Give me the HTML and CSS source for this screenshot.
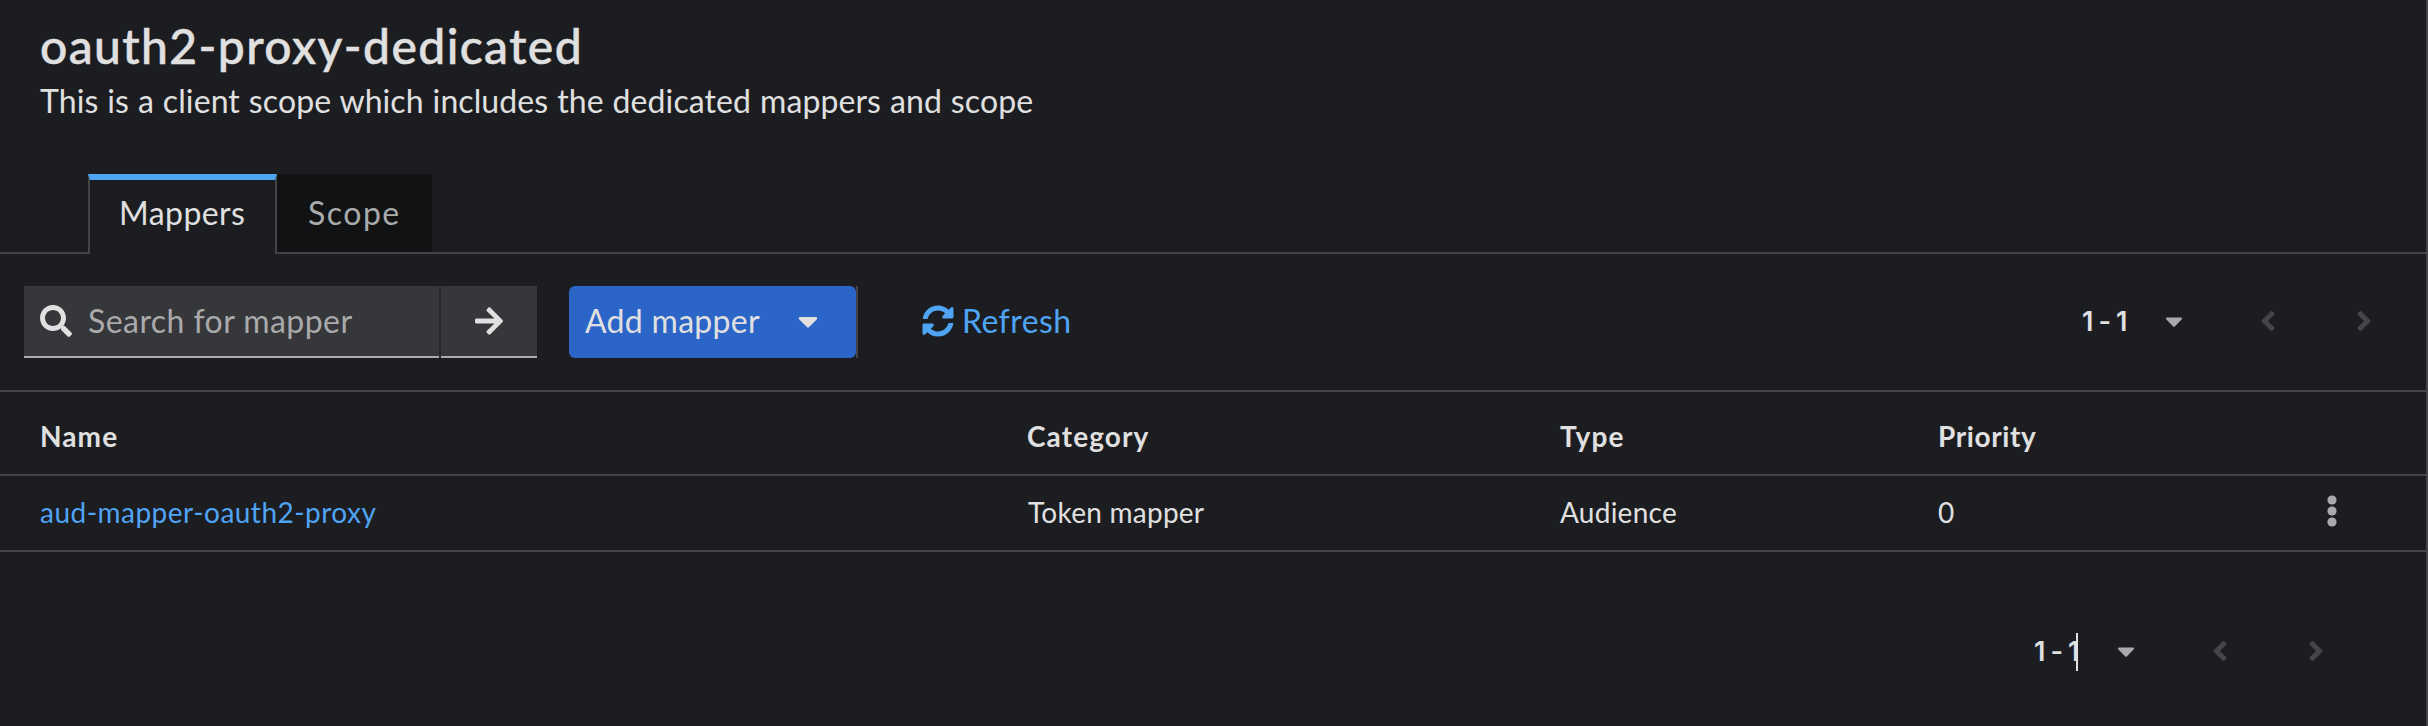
FILE: index.html
```
<!DOCTYPE html>
<html lang="en">
<head>
<meta charset="utf-8">
<title>oauth2-proxy-dedicated</title>
<link rel="stylesheet" href="styles.css">
</head>
<body>
<svg class="sprite" aria-hidden="true">
  <symbol id="search" viewBox="0 0 512 512"><path d="M505 442.7L405.3 343c-4.5-4.5-10.6-7-17-7H372c27.6-35.3 44-79.7 44-128C416 93.1 322.9 0 208 0S0 93.1 0 208s93.1 208 208 208c48.3 0 92.7-16.4 128-44v16.3c0 6.4 2.5 12.5 7 17l99.7 99.7c9.4 9.4 24.6 9.4 33.9 0l28.3-28.3c9.4-9.4 9.4-24.6.1-34zM208 336c-70.7 0-128-57.2-128-128 0-70.7 57.2-128 128-128 70.7 0 128 57.2 128 128 0 70.7-57.2 128-128 128z"/></symbol>
  <symbol id="arrow" viewBox="0 0 448 512"><path d="M190.5 66.9l22.2-22.2c9.4-9.4 24.6-9.4 33.9 0L441 239c9.4 9.4 9.4 24.6 0 33.9L246.6 467.3c-9.4 9.4-24.6 9.4-33.9 0l-22.2-22.2c-9.5-9.5-9.3-25 .4-34.3L311.4 296H24c-13.3 0-24-10.7-24-24v-32c0-13.3 10.7-24 24-24h287.4L190.9 101.2c-9.8-9.3-10-24.8-.4-34.3z"/></symbol>
  <symbol id="caret" viewBox="0 0 320 512"><path d="M31.3 192h257.3c17.8 0 26.7 21.5 14.1 34.1L174.1 354.7c-7.8 7.8-20.5 7.8-28.3 0L17.2 226.1C4.6 213.5 13.5 192 31.3 192z"/></symbol>
  <symbol id="angle" viewBox="0 0 256 512"><path d="M31.7 239l136-136c9.4-9.4 24.6-9.4 33.9 0l22.6 22.6c9.4 9.4 9.4 24.6 0 33.9L127.9 256l96.4 96.4c9.4 9.4 9.4 24.6 0 33.9L201.7 409c-9.4 9.4-24.6 9.4-33.9 0l-136-136c-9.5-9.4-9.5-24.6-.1-34z"/></symbol>
  <symbol id="sync" viewBox="0 0 512 512"><path d="M370.72 133.28C339.458 104.008 298.888 87.962 255.848 88c-77.458.068-144.328 53.178-162.791 126.85-1.344 5.363-6.122 9.15-11.651 9.15H24.103c-7.498 0-13.194-6.807-11.807-14.176C33.933 94.924 134.813 8 256 8c66.448 0 126.791 26.136 171.315 68.685L463.03 40.97C478.149 25.851 504 36.559 504 57.941V192c0 13.255-10.745 24-24 24H345.941c-21.382 0-32.09-25.851-16.971-40.971l41.75-41.749zM32 296h134.059c21.382 0 32.09 25.851 16.971 40.971l-41.75 41.75c31.262 29.273 71.835 45.319 114.876 45.28 77.418-.07 144.315-53.144 162.787-126.849 1.344-5.363 6.122-9.15 11.651-9.15h57.304c7.498 0 13.194 6.807 11.807 14.176C478.067 417.076 377.187 504 256 504c-66.448 0-126.791-26.136-171.315-68.685L48.97 471.03C33.851 486.149 8 475.441 8 454.059V320c0-13.255 10.745-24 24-24z"/></symbol>
  <symbol id="kebab" viewBox="0 0 12 32"><circle cx="6" cy="5" r="4.6"/><circle cx="6" cy="16" r="4.6"/><circle cx="6" cy="27" r="4.6"/></symbol>
</svg>
<main class="page">
  <header class="heading">
    <h1 class="title">oauth2-proxy-dedicated</h1>
    <p class="subtitle">This is a client scope which includes the dedicated mappers and scope</p>
  </header>
  <nav class="tabs">
    <a class="tab tab-current">Mappers</a>
    <a class="tab tab-scope">Scope</a>
    <span class="tabs-rest"></span>
  </nav>
  <section class="toolbar">
    <div class="search">
      <div class="search-field"><svg class="icon icon-search"><use href="#search"/></svg><span class="placeholder">Search for mapper</span></div>
      <button class="search-go" aria-label="Search"><svg class="icon icon-arrow"><use href="#arrow"/></svg></button>
    </div>
    <div class="add-wrap"><button class="add"><span>Add mapper</span><svg class="icon icon-caret"><use href="#caret"/></svg></button></div>
    <a class="refresh"><svg class="icon icon-sync"><use href="#sync"/></svg><span>Refresh</span></a>
    <div class="pager">
      <span class="range">1 - 1</span>
      <svg class="icon pager-caret"><use href="#caret"/></svg>
      <svg class="icon pager-prev"><use href="#angle"/></svg>
      <svg class="icon pager-next"><use href="#angle"/></svg>
    </div>
  </section>
  <section class="table">
    <div class="row row-head"><span class="name">Name</span><span class="category">Category</span><span class="type">Type</span><span class="priority">Priority</span></div>
    <div class="row"><a class="link">aud-mapper-oauth2-proxy</a><span class="token">Token mapper</span><span>Audience</span><span>0</span><svg class="icon icon-kebab"><use href="#kebab"/></svg></div>
  </section>
  <footer class="footer">
    <div class="pager">
      <span class="range range-caret">1 - 1</span>
      <svg class="icon pager-caret"><use href="#caret"/></svg>
      <svg class="icon pager-prev"><use href="#angle"/></svg>
      <svg class="icon pager-next"><use href="#angle"/></svg>
    </div>
  </footer>
</main>
</body>
</html>
```
FILE: styles.css
```
* { box-sizing: border-box; }
body {
  margin: 0;
  background: #1c1d21;
  color: #e0e0e0;
  font: 32px/48px Lato, "Open Sans", sans-serif;
  letter-spacing: .44px;
}
.sprite { display: none; }
.icon { display: block; flex: none; fill: currentColor; }
.page {
  width: 2428px;
  height: 726px;
  overflow: hidden;
  border-right: 2px solid #444548;
}
.heading { height: 174px; padding: 15px 40px 0; }
.title {
  margin: 0;
  font-size: 48px;
  line-height: 62px;
  font-weight: 500;
  letter-spacing: 1.4px;
  -webkit-text-stroke: .5px currentColor;
}
.subtitle { margin: 0; letter-spacing: .1px; word-spacing: .6px; }

.tabs { display: flex; height: 80px; }
.tabs::before { content: ""; width: 88px; border-bottom: 2px solid #444548; }
.tab { padding: 15px 0 0 31px; }
.tab-current {
  width: 189px;
  padding: 9px 0 0 29px;
  border: solid #444548;
  border-width: 6px 2px 0;
  border-top-color: #4fa4f4;
}
.tab-scope {
  width: 155px;
  background: #111214;
  color: #a9aaac;
  border-bottom: 2px solid #444548;
  letter-spacing: 1.5px;
}
.tabs-rest { flex: 1; border-bottom: 2px solid #444548; }

.toolbar {
  display: flex;
  align-items: flex-start;
  height: 138px;
  padding: 32px 54px 0 24px;
  border-bottom: 2px solid #444548;
}
.search { display: flex; gap: 2px; background: #2a2b2e; }
.search-field,
.search-go {
  height: 72px;
  background: #36373a;
  border: 0;
  border-bottom: 2px solid #aaabac;
}
.search-field { display: flex; width: 415px; padding: 11px 0 0 16px; }
.icon-search { width: 32px; height: 32px; margin-top: 8px; }
.placeholder { margin-left: 16px; color: #a9aaac; }
.search-go { display: flex; width: 96px; padding: 19px 0 0 34px; color: #e0e0e0; }
.icon-arrow { width: 28px; height: 32px; }
.add-wrap { margin-left: 32px; border-right: 2px solid #444548; }
.add {
  display: flex;
  width: 287px;
  height: 72px;
  padding: 11px 0 0 16px;
  border: 0;
  border-radius: 6px;
  background: #2b65c7;
  color: #e0e0e0;
  font: inherit;
  letter-spacing: .3px;
}
.icon-caret { width: 20px; height: 32px; margin: 8px 0 0 38px; }
.refresh { display: flex; margin-left: 64px; padding-top: 11px; color: #4fa4f4; }
.icon-sync { width: 32px; height: 32px; margin: 8px 8px 0 0; }

.pager { display: flex; margin-left: auto; padding-top: 19px; }
.range {
  position: relative;
  width: 83px;
  font: 600 27px/34px Inter, sans-serif;
  letter-spacing: -.9px;
}
.pager-caret { width: 18px; height: 28px; margin-top: 2px; color: #a9aaac; }
.pager-prev,
.pager-next { width: 16px; height: 32px; color: #444548; }
.pager-prev { margin-left: 77px; }
.pager-next { margin-left: 80px; transform: scaleX(-1); }

.row {
  display: grid;
  grid-template-columns: 988px 532px 378px 388px 12px;
  height: 76px;
  padding: 15px 0 0 40px;
  border-bottom: 2px solid #444548;
  font-size: 28px;
  line-height: 42px;
  letter-spacing: .25px;
}
.row-head { height: 84px; padding-top: 23px; font-weight: 700; letter-spacing: 1.1px; }
.category { margin-left: -1px; }
.priority { letter-spacing: .6px; }
.link { color: #4fa4f4; letter-spacing: .48px; }
.icon-kebab { width: 12px; height: 32px; margin-top: 4px; color: #a9aaac; }

.footer { display: flex; padding: 64px 102px 0 0; }
/* text cursor resting at the end of the page range */
.range-caret::after {
  content: "";
  position: absolute;
  left: 42px;
  top: -2px;
  width: 2px;
  height: 38px;
  background: #e0e0e0;
}
```
